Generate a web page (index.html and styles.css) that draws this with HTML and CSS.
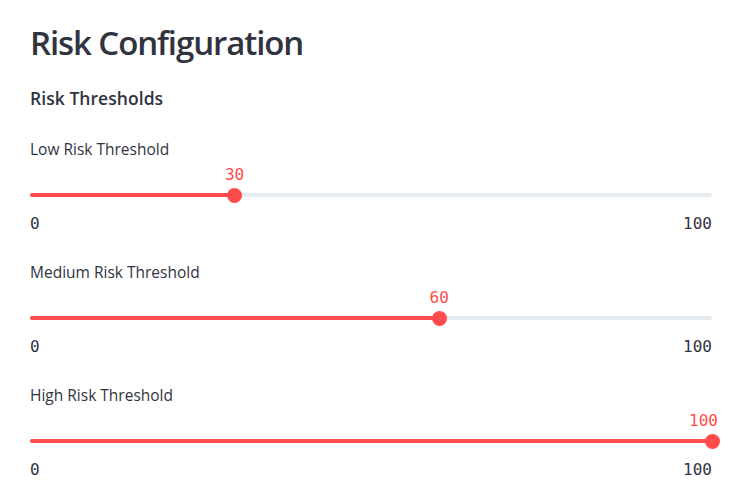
FILE: index.html
```html
<!DOCTYPE html>
<html>
<head>
<meta charset="utf-8">
<link rel="stylesheet" href="styles.css">
</head>
<body>
<main class="main">
  <h1 class="title">Risk Configuration</h1>
  <h4 class="subtitle">Risk Thresholds</h4>

  <div class="slider">
    <div class="slider-label">Low Risk Threshold</div>
    <div class="slider-body">
      <div class="track">
        <div class="fill" style="width:30%"></div>
        <div class="thumb" style="left:30%"><span class="value">30</span></div>
      </div>
    </div>
    <div class="ticks"><span>0</span><span>100</span></div>
  </div>

  <div class="slider">
    <div class="slider-label">Medium Risk Threshold</div>
    <div class="slider-body">
      <div class="track">
        <div class="fill" style="width:60%"></div>
        <div class="thumb" style="left:60%"><span class="value">60</span></div>
      </div>
    </div>
    <div class="ticks"><span>0</span><span>100</span></div>
  </div>

  <div class="slider">
    <div class="slider-label">High Risk Threshold</div>
    <div class="slider-body">
      <div class="track">
        <div class="fill" style="width:100%"></div>
        <div class="thumb" style="left:100%"><span class="value value-end">100</span></div>
      </div>
    </div>
    <div class="ticks"><span>0</span><span>100</span></div>
  </div>
</main>
</body>
</html>
```

FILE: styles.css
```css
html, body {
  margin: 0;
  padding: 0;
  background: #ffffff;
}

body {
  font-family: "Open Sans", "Noto Sans", sans-serif;
  color: #31333f;
}

.main {
  display: flex;
  flex-direction: column;
  padding: 21px 18px 0 30px;
}

.title {
  margin: 0;
  font-size: 33px;
  line-height: 44px;
  font-weight: 600;
  letter-spacing: -1.1px;
  color: #31333f;
}

.subtitle {
  margin: 21px 0 0 0;
  font-size: 17.5px;
  line-height: 24px;
  font-weight: 600;
  letter-spacing: 0.05px;
  color: #31333f;
}

.slider {
  display: flex;
  flex-direction: column;
  margin-top: 29px;
}

.slider + .slider {
  margin-top: 28px;
}

.slider-label {
  font-size: 15.5px;
  line-height: 20px;
  height: 20px;
}

.slider-body {
  padding-top: 29px;
  height: 14px;
  display: flex;
  align-items: center;
}

.track {
  position: relative;
  width: 100%;
  height: 4px;
  border-radius: 2px;
  background: #e6eaf1;
}

.fill {
  height: 4px;
  border-radius: 2px;
  background: #ff4b4b;
}

.thumb {
  position: absolute;
  top: 50%;
  width: 15px;
  height: 15px;
  margin: -7.5px 0 0 -7.5px;
  border-radius: 50%;
  background: #ff4b4b;
}

.value {
  position: absolute;
  left: 50%;
  bottom: 18px;
  transform: translateX(-50%);
  font-family: "DejaVu Sans Mono", "Liberation Mono", monospace;
  font-size: 16px;
  line-height: 20px;
  color: #ff4b4b;
  white-space: nowrap;
}

.value-end {
  left: auto;
  right: 1.5px;
  transform: none;
}

.ticks {
  display: flex;
  justify-content: space-between;
  margin-top: 12px;
  font-family: "DejaVu Sans Mono", "Liberation Mono", monospace;
  font-size: 16px;
  line-height: 20px;
  color: #31333f;
}
```
